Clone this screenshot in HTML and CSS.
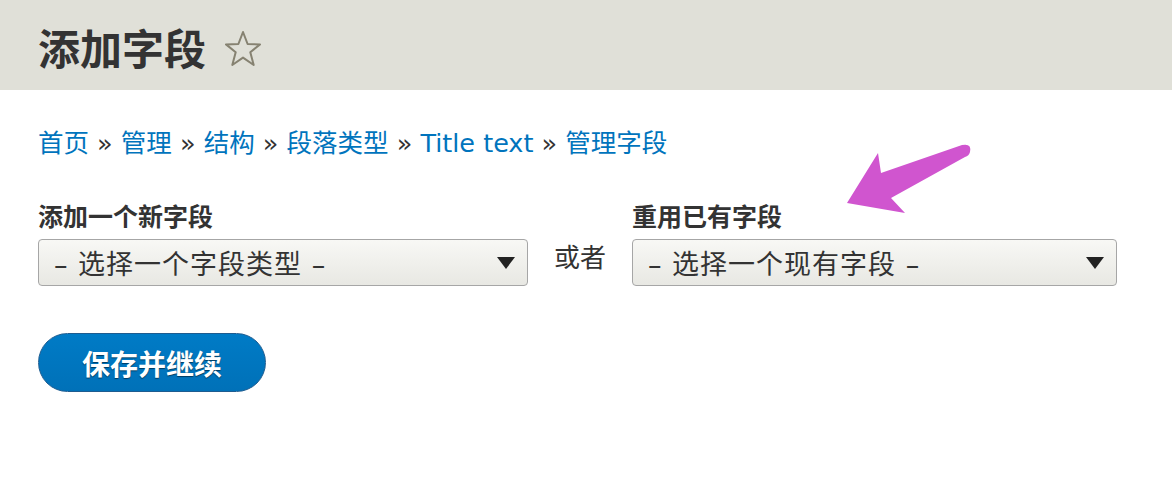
FILE: index.html
```html
<!DOCTYPE html>
<html lang="zh">
<head>
  <meta charset="UTF-8" />
  <title>添加字段</title>
  <link rel="stylesheet" href="styles.css">
</head>
<body>

  <header class="page-head">
    <h1>添加字段</h1>
    <svg class="star" width="38" height="38" viewBox="0 0 38 38">
      <polygon points="19,2 23.6,14 36,14.4 26.3,22.2 29.7,35 19,27.6 8.3,35 11.7,22.2 2,14.4 14.4,14"
        fill="none" stroke="#868271" stroke-width="2" stroke-linejoin="round"/>
    </svg>
  </header>

  <main class="content">
    <nav class="breadcrumb">
      <a href="#">首页</a> » <a href="#">管理</a> » <a href="#">结构</a> » <a href="#">段落类型</a> » <a href="#">Title text</a> » <a href="#">管理字段</a>
    </nav>

    <form class="field-form">
      <div class="field-row">
        <div class="field field-new">
          <label>添加一个新字段</label>
          <div class="select">
            <span>– 选择一个字段类型 –</span>
            <svg width="18" height="12" viewBox="0 0 18 12"><polygon points="0,0 18,0 9,12" fill="#222"/></svg>
          </div>
        </div>
        <div class="or">或者</div>
        <div class="field field-existing">
          <label>重用已有字段</label>
          <div class="select">
            <span>– 选择一个现有字段 –</span>
            <svg width="18" height="12" viewBox="0 0 18 12"><polygon points="0,0 18,0 9,12" fill="#222"/></svg>
          </div>
        </div>
      </div>
      <button type="button" class="btn-primary">保存并继续</button>
    </form>
  </main>

  <!-- annotation arrow laid over the page -->
  <svg class="arrow" width="140" height="80" viewBox="840 140 140 80">
    <path d="M847,203 L878,153 L881,173 L962,145 Q972,143 970,152 Q969,156 965,157 L891,198 L905,213 Z" fill="#d055cf"/>
  </svg>

</body>
</html>
```

FILE: styles.css
```css
* { box-sizing: border-box; }
body {
  margin: 0;
  background: #fff;
  color: #333;
  font-family: "DejaVu Sans", "Noto Sans CJK SC", sans-serif;
  position: relative;
}
.page-head {
  background: #e0e0d8;
  height: 90px;
  padding: 0 38px;
  display: flex;
  align-items: center;
  gap: 18px;
}
.page-head h1 {
  margin: 0;
  font-size: 42px;
  font-weight: bold;
  color: #333;
  line-height: 1;
  padding-top: 12px;
}
.star { margin-top: 8px; }
.content {
  padding: 0 38px;
}
.breadcrumb {
  margin-top: 35px;
  font-size: 25.5px;
  line-height: 36px;
  color: #333;
}
.breadcrumb a {
  color: #0074bd;
  text-decoration: none;
}
.field-form {
  margin-top: 41px;
}
.field-row {
  display: flex;
  align-items: flex-end;
}
.field label {
  display: block;
  font-size: 25px;
  font-weight: bold;
  line-height: 32px;
  margin-bottom: 5px;
}
.field-new { width: 490px; }
.field-existing { width: 485px; }
.or {
  width: 104px;
  text-align: center;
  font-size: 26px;
  line-height: 40px;
  padding-bottom: 8px;
}
.select {
  height: 47px;
  border: 1px solid #a6a6a6;
  border-radius: 4px;
  background: linear-gradient(#f8f8f5, #e8e8e3);
  display: flex;
  align-items: center;
  justify-content: space-between;
  padding: 0 12px 0 15px;
  font-size: 27px;
  letter-spacing: 1px;
  color: #333;
}
.btn-primary {
  margin-top: 47px;
  width: 228px;
  height: 59px;
  border: 1px solid #1e5c90;
  border-radius: 30px;
  background: linear-gradient(#007bc6, #0071b8);
  color: #fff;
  font-family: "DejaVu Sans", "Noto Sans CJK SC", sans-serif;
  font-size: 28px;
  font-weight: bold;
  text-shadow: 0 1px 1px rgba(0, 0, 0, 0.5);
  cursor: pointer;
}
.arrow {
  position: absolute;
  left: 840px;
  top: 140px;
}
```
